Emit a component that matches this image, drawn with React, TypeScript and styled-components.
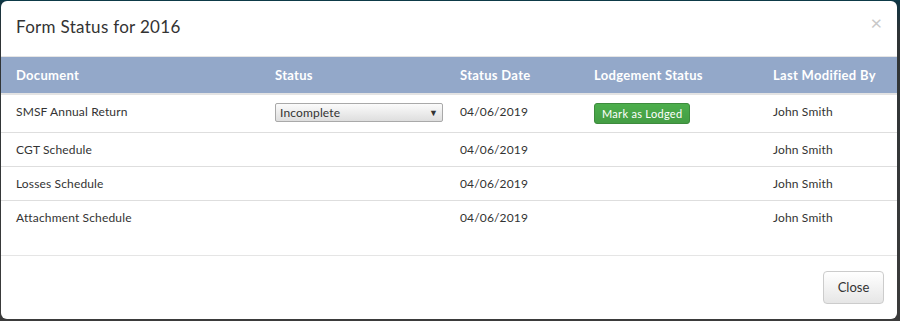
import React from 'react';
import styled, { createGlobalStyle } from 'styled-components';

interface FormRow {
  document: string;
  date: string;
  modifiedBy: string;
  editable?: boolean;
}

const rows: FormRow[] = [
  { document: 'SMSF Annual Return', date: '04/06/2019', modifiedBy: 'John Smith', editable: true },
  { document: 'CGT Schedule', date: '04/06/2019', modifiedBy: 'John Smith' },
  { document: 'Losses Schedule', date: '04/06/2019', modifiedBy: 'John Smith' },
  { document: 'Attachment Schedule', date: '04/06/2019', modifiedBy: 'John Smith' },
];

const GlobalStyle = createGlobalStyle`
  html, body {
    margin: 0;
    padding: 0;
    background: #3a3f41;
  }
  body {
    font-family: Lato, "Liberation Sans", sans-serif;
    color: #333;
  }
`;

const Backdrop = styled.div`
  width: 900px;
  height: 321px;
  box-sizing: border-box;
  padding: 1px;
  border-top: 1px solid #0d3a48;
  background: linear-gradient(180deg, #0f3442 0%, #2f3436 10%, #3b3b3b 100%);
`;

const Modal = styled.div`
  width: 896px;
  height: 318px;
  margin-top: -1px;
  background: #fff;
  border-radius: 6px;
  display: flex;
  flex-direction: column;
  overflow: hidden;
`;

const Header = styled.div`
  height: 55px;
  border-bottom: 1px solid #e5e5e5;
  display: flex;
  align-items: center;
  justify-content: space-between;
  padding: 0 15px;
`;

const Title = styled.h4`
  margin: -4px 0 0;
  font-size: 17px;
  font-weight: 400;
  color: #333;
  letter-spacing: 0.3px;
`;

const CloseX = styled.span`
  font-size: 20px;
  color: #c8c8c8;
  margin-top: -14px;
  line-height: 1;
`;

const Body = styled.div`
  flex: 1;
  border-bottom: 1px solid #e5e5e5;
`;

const Table = styled.table`
  width: 100%;
  border-collapse: collapse;
  table-layout: fixed;
  font-size: 12px;
`;

const HeadCell = styled.th<{ w?: number }>`
  width: ${p => (p.w ? `${p.w}px` : 'auto')};
  background: #93a8c9;
  color: #fff;
  font-weight: 700;
  font-size: 13px;
  letter-spacing: 0.3px;
  text-align: left;
  height: 36px;
  padding: 0 0 0 15px;
  border-bottom: 2px solid #e3e3e3;
  white-space: nowrap;
`;

const Row = styled.tr<{ tall?: boolean }>`
  height: ${p => (p.tall ? 38 : 34)}px;
  border-bottom: 1px solid #dedede;
  &:last-child {
    border-bottom: none;
  }
`;

const Cell = styled.td`
  padding: 9px 0 0 15px;
  vertical-align: top;
  color: #333;
  white-space: nowrap;
  letter-spacing: 0.15px;
`;

const FakeSelect = styled.div`
  box-sizing: border-box;
  width: 168px;
  height: 19px;
  margin-top: -1px;
  border: 1px solid #a9a9a9;
  border-radius: 2px;
  background: linear-gradient(180deg, #fbfbfb 0%, #dedede 100%);
  display: flex;
  align-items: center;
  justify-content: space-between;
  padding: 0 4px 0 4px;
  font-size: 12px;
  color: #333;
`;

const Arrow = styled.span`
  font-size: 9px;
  color: #333;
`;

const LodgeButton = styled.button`
  margin-top: -1px;
  height: 21px;
  padding: 0 7px;
  border: 1px solid #3d8b3d;
  border-radius: 3px;
  background: linear-gradient(180deg, #4cae4c 0%, #449d44 100%);
  color: #fff;
  font-family: inherit;
  font-size: 11px;
  letter-spacing: 0.3px;
  cursor: pointer;
`;

const Footer = styled.div`
  height: 63px;
  display: flex;
  align-items: center;
  justify-content: flex-end;
  padding: 0 13px 0 15px;
`;

const CloseButton = styled.button`
  width: 61px;
  height: 33px;
  margin-top: -1px;
  border: 1px solid #ccc;
  border-radius: 4px;
  background: linear-gradient(180deg, #fff 0%, #e6e6e6 100%);
  color: #333;
  font-family: inherit;
  font-size: 13px;
  cursor: pointer;
`;

const App: React.FC = () => {
  return (
    <>
      <GlobalStyle />
      <Backdrop>
        <Modal>
          <Header>
            <Title>Form Status for 2016</Title>
            <CloseX>×</CloseX>
          </Header>
          <Body>
            <Table>
              <thead>
                <tr>
                  <HeadCell w={244}>Document</HeadCell>
                  <HeadCell w={170}>Status</HeadCell>
                  <HeadCell w={119}>Status Date</HeadCell>
                  <HeadCell w={164}>Lodgement Status</HeadCell>
                  <HeadCell>Last Modified By</HeadCell>
                </tr>
              </thead>
              <tbody>
                {rows.map(row => (
                  <Row key={row.document} tall={row.editable}>
                    <Cell>{row.document}</Cell>
                    <Cell>
                      {row.editable && (
                        <FakeSelect>
                          <span>Incomplete</span>
                          <Arrow>▼</Arrow>
                        </FakeSelect>
                      )}
                    </Cell>
                    <Cell>{row.date}</Cell>
                    <Cell>{row.editable && <LodgeButton>Mark as Lodged</LodgeButton>}</Cell>
                    <Cell>{row.modifiedBy}</Cell>
                  </Row>
                ))}
              </tbody>
            </Table>
          </Body>
          <Footer>
            <CloseButton>Close</CloseButton>
          </Footer>
        </Modal>
      </Backdrop>
    </>
  );
};

export default App;
